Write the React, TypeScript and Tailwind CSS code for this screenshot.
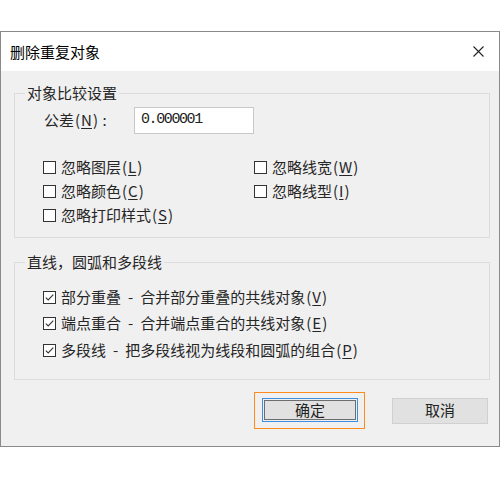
import React from "react";

function Box({ checked }: { checked?: boolean }) {
  return (
    <span className="w-[13px] h-[13px] border border-[#333333] bg-white flex items-center justify-center shrink-0">
      {checked && (
        <svg width="11" height="11" viewBox="0 0 11 11">
          <path d="M1.8 5.6 L4.2 8 L9.3 2.6" fill="none" stroke="#333333" strokeWidth="1.1" />
        </svg>
      )}
    </span>
  );
}

function M({ c }: { c: string }) {
  return (
    <>
      <span className="px-[1px]">(</span>
      <span className="underline underline-offset-2 decoration-1">{c}</span>
      <span className="px-[1px]">)</span>
    </>
  );
}

function Check({ checked, children }: { checked?: boolean; children: React.ReactNode }) {
  return (
    <div className="flex items-center gap-[5px] h-full">
      <Box checked={checked} />
      <span className="whitespace-pre">{children}</span>
    </div>
  );
}

export default function App() {
  return (
    <div className="w-[500px] h-[480px] bg-white pt-[31px] font-['Noto_Sans_CJK_SC',sans-serif] text-[15px] text-[#262626]">
      <div className="h-[416px] border border-[#8a8a8a] flex flex-col">
        <div className="h-[39px] bg-white flex items-center justify-between pl-[9px] pr-[15px] text-black">
          <span className="leading-[20px]">删除重复对象</span>
          <svg width="11" height="11" viewBox="0 0 11 11">
            <path d="M0.5 0.5 L10.5 10.5 M10.5 0.5 L0.5 10.5" stroke="#222" strokeWidth="1.1" />
          </svg>
        </div>
        <div className="flex-1 bg-[#f0f0f0] pl-[13px] pr-[9px] pt-[12px]">
          <fieldset className="border border-[#dcdcdc] m-0 p-0">
            <legend className="ml-[10px] px-[2px] h-[20px] leading-[20px]">对象比较设置</legend>
            <div className="pl-[28px] pt-[4px] pb-[10px]">
              <div className="h-[27px] flex items-center">
                <span className="w-[91px] pl-[1px]">
                  公差<M c="N" /> :
                </span>
                <div className="w-[120px] h-[27px] border border-[#c8c8c8] bg-white pl-[6px] flex items-center font-['Liberation_Mono',monospace] text-[15px] tracking-[-1.4px] text-[#222]">
                  0.000001
                </div>
              </div>
              <div className="mt-[21px] grid grid-cols-[211px_1fr] auto-rows-[24px]">
                <Check>忽略图层<M c="L" /></Check>
                <Check>忽略线宽<M c="W" /></Check>
                <Check>忽略颜色<M c="C" /></Check>
                <Check>忽略线型<M c="I" /></Check>
                <Check>忽略打印样式<M c="S" /></Check>
              </div>
            </div>
          </fieldset>
          <fieldset className="border border-[#dcdcdc] m-0 p-0 mt-[14px]">
            <legend className="ml-[10px] px-[2px] h-[20px] leading-[20px]">直线，圆弧和多段线</legend>
            <div className="pl-[28px] pt-[12px] pb-[15px] flex flex-col">
              <div className="h-[26px]">
                <Check checked>
                  部分重叠<span className="px-[7px]">-</span>合并部分重叠的共线对象<M c="V" />
                </Check>
              </div>
              <div className="h-[27px]">
                <Check checked>
                  端点重合<span className="px-[7px]">-</span>合并端点重合的共线对象<M c="E" />
                </Check>
              </div>
              <div className="h-[27px]">
                <Check checked>
                  多段线<span className="px-[7px]">-</span>把多段线视为线段和圆弧的组合<M c="P" />
                </Check>
              </div>
            </div>
          </fieldset>
          <div className="mt-[12px] flex justify-end items-center pr-[2px]">
            <div className="border border-[#ff8c1a] pl-[7px] pr-[6px] pt-[5px] pb-[6px]">
              <div className="w-[96px] h-[24px] border border-[#3c8ee0] p-[1px]">
                <div className="w-full h-full border border-[#6d6d6d] bg-[#e1e1e1] flex items-center justify-center text-[#222]">
                  确定
                </div>
              </div>
            </div>
            <div className="ml-[27px] w-[96px] h-[26px] border border-[#d0d0d0] bg-[#e1e1e1] flex items-center justify-center text-[#222]">
              取消
            </div>
          </div>
        </div>
      </div>
    </div>
  );
}
